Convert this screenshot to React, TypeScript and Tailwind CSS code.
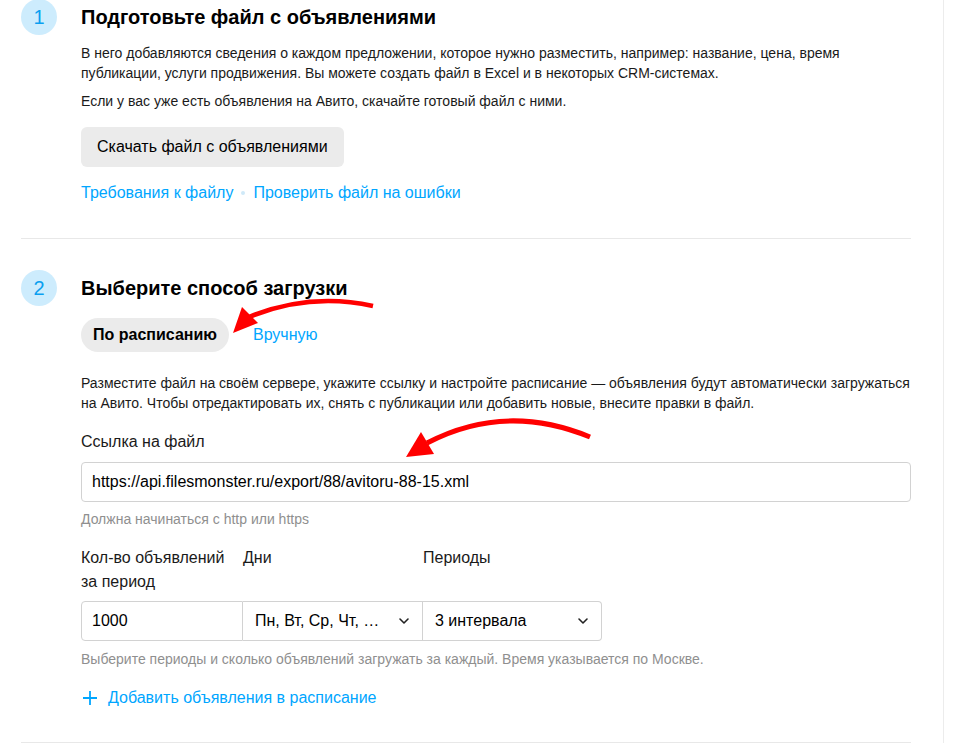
import React from 'react';

function StepBadge({ n }: { n: number }) {
  return (
    <div className="w-9 h-9 shrink-0 rounded-full bg-[#cdecfd] flex items-center justify-center text-[20px] text-[#0a9ff0]">
      {n}
    </div>
  );
}

function Chevron() {
  return (
    <svg width="12" height="8" viewBox="0 0 12 8" fill="none">
      <path d="M2 2l4 4 4-4" stroke="#222" strokeWidth="1.6" strokeLinecap="round" strokeLinejoin="round" />
    </svg>
  );
}

function Arrows() {
  return (
    <svg className="absolute inset-0 pointer-events-none" width="966" height="744" viewBox="0 0 966 744">
      <path d="M373 306 Q310 292 249 317" stroke="#ff0000" strokeWidth="4.5" fill="none" />
      <polygon points="233,333 242,307 258,323" fill="#ff0000" />
      <path d="M590 437 Q505 402 427 443" stroke="#ff0000" strokeWidth="5" fill="none" />
      <polygon points="406,457 421,432 434,454" fill="#ff0000" />
    </svg>
  );
}

export default function App() {
  return (
    <div className="relative w-[966px] h-[744px] overflow-hidden bg-white text-[#1a1a1a] font-['Liberation_Sans',Arial,sans-serif]">
      <div className="w-[944px] h-full border-r border-[#ececec]">
        {/* step 1 */}
        <section className="-mt-px ml-[21px] w-[890px] flex gap-6 pb-[33px] border-b border-[#e8e8e8]">
          <StepBadge n={1} />
          <div className="flex-1 min-w-0">
            <h2 className="text-[20px] leading-9 font-bold text-black">Подготовьте файл с объявлениями</h2>
            <p className="mt-2 text-[14px] leading-5">
              В него добавляются сведения о каждом предложении, которое нужно разместить, например: название, цена, время
              публикации, услуги продвижения. Вы можете создать файл в Excel и в некоторых CRM-системах.
            </p>
            <p className="mt-2 text-[14px] leading-5">
              Если у вас уже есть объявления на Авито, скачайте готовый файл с ними.
            </p>
            <button className="mt-4 h-10 px-4 rounded-md bg-[#ebebeb] text-[16px] text-black">
              Скачать файл с объявлениями
            </button>
            <div className="mt-[14px] flex items-center gap-2 text-[16px] leading-6 text-[#00a6ff]">
              <span>Требования к файлу</span>
              <span className="w-1 h-1 rounded-full bg-[#cfe9f8]" />
              <span>Проверить файл на ошибки</span>
            </div>
          </div>
        </section>

        {/* step 2 */}
        <section className="ml-[21px] w-[890px] flex gap-6 pt-[31px] pb-[32px] border-b border-[#e8e8e8]">
          <StepBadge n={2} />
          <div className="flex-1 min-w-0">
            <h2 className="text-[20px] leading-9 font-bold text-black">Выберите способ загрузки</h2>
            <div className="mt-3 flex items-center gap-6">
              <div className="h-[34px] px-3 rounded-full bg-[#ebebeb] flex items-center text-[16px] font-bold text-black">
                По расписанию
              </div>
              <span className="text-[16px] text-[#00a6ff]">Вручную</span>
            </div>
            <p className="mt-[21px] text-[14px] leading-5">
              Разместите файл на своём сервере, укажите ссылку и настройте расписание — объявления будут автоматически загружаться
              на Авито. Чтобы отредактировать их, снять с публикации или добавить новые, внесите правки в файл.
            </p>
            <div className="mt-[17px] text-[16px] leading-6">Ссылка на файл</div>
            <div className="mt-2 h-10 px-[10px] flex items-center rounded border border-[#d2d2d2] text-[16px] text-black">
              https://api.filesmonster.ru/export/88/avitoru-88-15.xml
            </div>
            <div className="mt-2 text-[14px] leading-[18px] text-[#8f8f8f]">Должна начинаться с http или https</div>

            <div className="mt-[18px] flex text-[16px] leading-6">
              <div className="w-[162px]">Кол-во объявлений за период</div>
              <div className="w-[180px]">Дни</div>
              <div className="w-[179px]">Периоды</div>
            </div>
            <div className="mt-[7px] flex h-10 text-[16px] text-black">
              <div className="w-[162px] flex items-center px-[10px] border border-[#d2d2d2] rounded-l">1000</div>
              <div className="w-[180px] flex items-center justify-between pl-3 pr-3 border-y border-r border-[#d2d2d2]">
                <span>Пн, Вт, Ср, Чт, …</span>
                <Chevron />
              </div>
              <div className="w-[179px] flex items-center justify-between pl-3 pr-3 border-y border-r border-[#d2d2d2] rounded-r">
                <span>3 интервала</span>
                <Chevron />
              </div>
            </div>
            <div className="mt-[9px] text-[14px] leading-[18px] text-[#8f8f8f]">
              Выберите периоды и сколько объявлений загружать за каждый. Время указывается по Москве.
            </div>
            <div className="mt-[18px] flex items-center gap-[11px] text-[16px] leading-6 text-[#00a6ff]">
              <svg width="14" height="14" viewBox="0 0 14 14" className="ml-[2px]">
                <path d="M7 0v14M0 7h14" stroke="#00a6ff" strokeWidth="1.8" />
              </svg>
              <span>Добавить объявления в расписание</span>
            </div>
          </div>
        </section>
      </div>
      <Arrows />
    </div>
  );
}
